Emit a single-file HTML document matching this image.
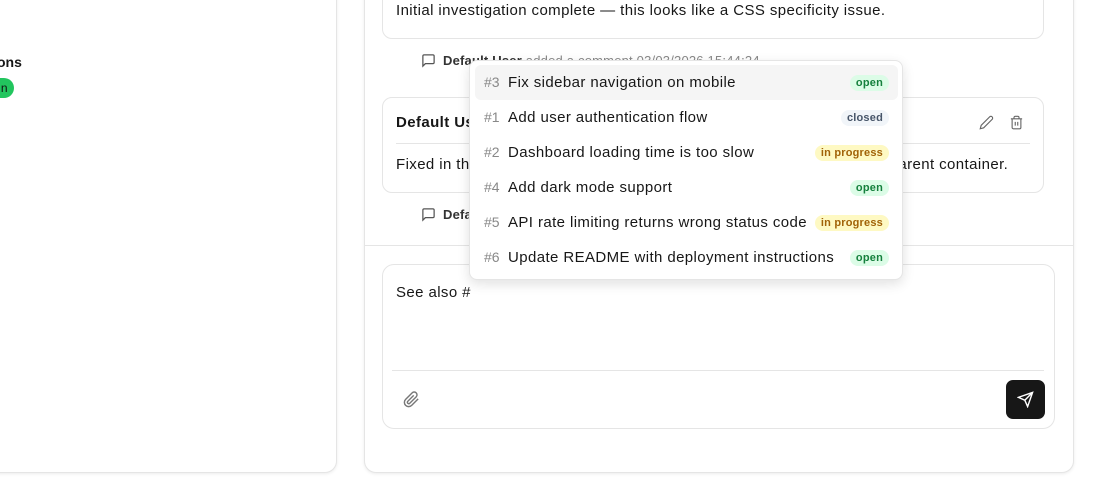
<!DOCTYPE html>
<html><head><style>
*{box-sizing:border-box;margin:0;padding:0}
body{width:1100px;height:500px;background:#fff;font-family:"Liberation Sans",sans-serif;color:#171717;position:relative;overflow:hidden;letter-spacing:0.4px}
.abs{position:absolute}
.panel{border:1px solid #e5e5e5;border-radius:12px;background:#fff;box-shadow:0 1px 3px rgba(0,0,0,.08)}
.card{border:1px solid #e5e5e5;border-radius:10px;background:#fff}
.t15{font-size:15px}
.meta{font-size:13px;color:#333;font-weight:bold;letter-spacing:0.2px}
.dd{border:1px solid #e5e5e5;border-radius:8px;background:#fff;box-shadow:0 4px 12px rgba(0,0,0,.12)}
.row{position:absolute;left:5px;width:423px;height:35px;border-radius:6px;font-size:15px;line-height:35px}
.row .n{position:absolute;left:9px;color:#888;font-size:14px;letter-spacing:0}
.row .ti{position:absolute;left:33px}
.b{position:absolute;right:9px;top:10px;height:16px;line-height:16px;padding:0 6px;border-radius:8px;font-size:11px;font-weight:bold;letter-spacing:0.2px}
.open{background:#dcfce7;color:#15803d}
.closed{background:#f1f5f9;color:#475569}
.prog{background:#fef9c3;color:#a16207}
</style></head><body>
<div class="abs panel" style="left:-20px;top:-20px;width:357px;height:493px"></div>
<div class="abs" style="left:-3px;top:54px;font-size:14px;font-weight:bold;letter-spacing:0">ons</div>
<div class="abs" style="left:-20px;top:78px;width:34px;height:20px;border-radius:10px;background:#22c55e;font-size:12px;line-height:20px;text-align:right;padding-right:6px;color:#111">n</div>

<div class="abs panel" style="left:364px;top:-20px;width:710px;height:493px"></div>
<div class="abs card" style="left:382px;top:-20px;width:662px;height:59px"></div>
<div class="abs t15" style="left:396px;top:2px">Initial investigation complete — this looks like a CSS specificity issue.</div>
<svg class="abs" style="left:421px;top:53px" width="15" height="15" viewBox="0 0 24 24" fill="none" stroke="#555" stroke-width="2"><path d="M21 15a2 2 0 0 1-2 2H7l-4 4V5a2 2 0 0 1 2-2h14a2 2 0 0 1 2 2z"/></svg>
<div class="abs meta" style="left:443px;top:53px">Default User <span style="font-weight:normal;color:#888">added a comment 03/03/2026 15:44:24</span></div>

<div class="abs card" style="left:382px;top:97px;width:662px;height:96px"></div>
<div class="abs" style="left:396px;top:114px;font-size:15px;font-weight:bold">Default User</div>
<svg class="abs" style="left:979px;top:115px" width="15" height="15" viewBox="0 0 24 24" fill="none" stroke="#666" stroke-width="1.8"><path d="M17 3a2.8 2.8 0 0 1 4 4L7.5 20.5 2 22l1.5-5.5z"/></svg>
<svg class="abs" style="left:1009px;top:115px" width="15" height="15" viewBox="0 0 24 24" fill="none" stroke="#666" stroke-width="1.8"><path d="M3 6h18M19 6v14a2 2 0 0 1-2 2H7a2 2 0 0 1-2-2V6M8 6V4a2 2 0 0 1 2-2h4a2 2 0 0 1 2 2v2M10 11v6M14 11v6"/></svg>
<div class="abs" style="left:396px;top:143px;width:634px;height:1px;background:#e5e5e5"></div>
<div class="abs t15" style="left:396px;top:156px;white-space:nowrap">Fixed in the latest commit. Added overflow handling to the main in the parent container.</div>
<svg class="abs" style="left:421px;top:207px" width="15" height="15" viewBox="0 0 24 24" fill="none" stroke="#555" stroke-width="2"><path d="M21 15a2 2 0 0 1-2 2H7l-4 4V5a2 2 0 0 1 2-2h14a2 2 0 0 1 2 2z"/></svg>
<div class="abs meta" style="left:443px;top:207px">Default User</div>

<div class="abs" style="left:365px;top:245px;width:708px;height:1px;background:#e5e5e5"></div>
<div class="abs card" style="left:382px;top:264px;width:673px;height:165px;border-radius:12px"></div>
<div class="abs t15" style="left:396px;top:284px">See also #</div>
<div class="abs" style="left:392px;top:370px;width:652px;height:1px;background:#e5e5e5"></div>
<svg class="abs" style="left:403px;top:391px" width="17" height="17" viewBox="0 0 24 24" fill="none" stroke="#777" stroke-width="2"><path d="M21.4 11.1l-9.2 9.2a6 6 0 0 1-8.5-8.5l9.2-9.2a4 4 0 0 1 5.7 5.7l-9.2 9.2a2 2 0 0 1-2.8-2.8l8.5-8.5"/></svg>
<div class="abs" style="left:1006px;top:380px;width:39px;height:39px;border-radius:7px;background:#171717"></div>
<svg class="abs" style="left:1017px;top:391px" width="17" height="17" viewBox="0 0 24 24" fill="none" stroke="#fff" stroke-width="2"><path d="M22 2L11 13M22 2l-7 20-4-9-9-4z"/></svg>

<div class="abs dd" style="left:469px;top:60px;width:434px;height:220px">
<div class="row" style="top:4px;background:#f5f5f5"><span class="n">#3</span><span class="ti">Fix sidebar navigation on mobile</span><span class="b open">open</span></div>
<div class="row" style="top:39px"><span class="n">#1</span><span class="ti">Add user authentication flow</span><span class="b closed">closed</span></div>
<div class="row" style="top:74px"><span class="n">#2</span><span class="ti">Dashboard loading time is too slow</span><span class="b prog">in progress</span></div>
<div class="row" style="top:109px"><span class="n">#4</span><span class="ti">Add dark mode support</span><span class="b open">open</span></div>
<div class="row" style="top:144px"><span class="n">#5</span><span class="ti">API rate limiting returns wrong status code</span><span class="b prog">in progress</span></div>
<div class="row" style="top:179px"><span class="n">#6</span><span class="ti">Update README with deployment instructions</span><span class="b open">open</span></div>
</div>
</body></html>
